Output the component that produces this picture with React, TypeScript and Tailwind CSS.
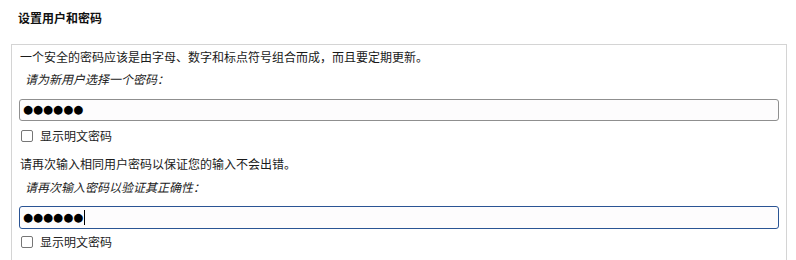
import React from "react";

const cjk = "font-['Noto_Sans_CJK_SC','Noto_Sans',sans-serif]";

function PasswordBox({ value, focused = false }: { value: string; focused?: boolean }) {
  return (
    <div
      className={`flex items-center rounded-[3px] border bg-[#fdfcfd] pl-[3px] ${
        focused ? "h-[23px] border-[#2a5494]" : "h-[22px] border-[#8f8f8f]"
      }`}
    >
      <span className="font-['DejaVu_Sans',sans-serif] text-[11.5px] leading-none text-black">
        {"●".repeat(value.length)}
      </span>
      {focused && <span className="ml-px h-[15px] w-px bg-black" />}
    </div>
  );
}

function ShowPlain() {
  return (
    <label className="flex h-[18px] items-center gap-[7px] pl-[2px]">
      <span className="h-[12px] w-[12px] rounded-[2px] border border-[#767676] bg-white" />
      <span className="text-[12px] text-[#222]">显示明文密码</span>
    </label>
  );
}

export default function App() {
  return (
    <div className={`h-screen overflow-hidden bg-white ${cjk}`}>
      {/* 标题 */}
      <div className="flex h-[36px] items-center pl-[18px] text-[12px] font-bold text-[#111]">
        设置用户和密码
      </div>

      {/* 表单框 */}
      <div className="ml-[11px] mr-[9px] mt-[8px] h-[230px] border border-[#d4d4d4] px-[7px] pt-[3px]">
        <p className="pl-px text-[12px] leading-[18px] text-[#1a1a1a]">
          一个安全的密码应该是由字母、数字和标点符号组合而成，而且要定期更新。
        </p>
        <p className="mt-[4px] pl-[6px] text-[12px] italic leading-[18px] text-[#222]">
          请为新用户选择一个密码：
        </p>
        <div className="mt-[11px]">
          <PasswordBox value="secret" />
        </div>
        <div className="mt-[6px]">
          <ShowPlain />
        </div>

        <p className="mt-[10px] pl-px text-[12px] leading-[18px] text-[#1a1a1a]">
          请再次输入相同用户密码以保证您的输入不会出错。
        </p>
        <p className="mt-[5px] pl-[6px] text-[12px] italic leading-[18px] text-[#222]">
          请再次输入密码以验证其正确性：
        </p>
        <div className="mt-[10px]">
          <PasswordBox value="secret" focused />
        </div>
        <div className="mt-[4px]">
          <ShowPlain />
        </div>
      </div>
    </div>
  );
}
